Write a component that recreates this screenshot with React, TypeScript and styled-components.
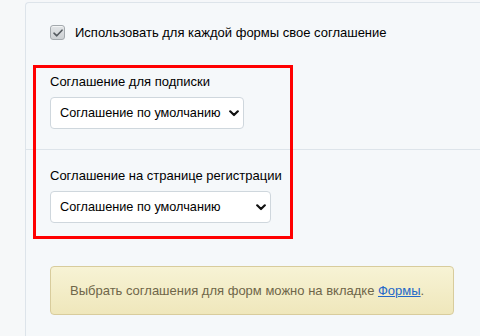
import React from 'react'
import styled, { createGlobalStyle } from 'styled-components'

const GlobalStyle = createGlobalStyle`
  html, body {
    margin: 0;
    padding: 0;
    background: #f5f7f9;
    font-family: 'Liberation Sans', Arial, sans-serif;
    font-size: 13px;
    color: #000;
  }
`

const Page = styled.div`
  display: flex;
  width: 480px;
  height: 336px;
  overflow: hidden;
  background: #f5f7f9;
`

const Gutter = styled.div`
  width: 25px;
  flex-shrink: 0;
  background: #f6f8f9;
`

const Panel = styled.div`
  flex: 1;
  margin-top: 2px;
  border-top: 1px solid #dde4ea;
  border-left: 1px solid #dde4ea;
  border-top-left-radius: 4px;
  background: #f5f8fa;
`

const Row = styled.div<{ $top: number; $bottom: number }>`
  padding: ${({ $top }) => $top}px 0 ${({ $bottom }) => $bottom}px 24px;
  & + & {
    border-top: 1px solid #dde4ea;
  }
`

const CheckRow = styled.label`
  display: flex;
  align-items: center;
  gap: 10px;
  line-height: 14px;
`

const CheckBox = styled.span`
  display: flex;
  align-items: center;
  justify-content: center;
  width: 13px;
  height: 13px;
  border: 1px solid #a3a9ad;
  border-radius: 3px;
  background: linear-gradient(#e2e5e7, #cdd1d4);
  box-shadow: inset 0 1px 0 rgba(255, 255, 255, 0.6);
`

const Highlight = styled.div`
  position: relative;
`

const RedFrame = styled.div`
  position: absolute;
  top: 9px;
  left: 7px;
  width: 254px;
  height: 168px;
  border: 3px solid #ff0000;
  pointer-events: none;
`

const Label = styled.div`
  line-height: 16px;
  margin-bottom: 7px;
`

const SelectBox = styled.div<{ $width: number }>`
  display: flex;
  align-items: center;
  justify-content: space-between;
  box-sizing: border-box;
  width: ${({ $width }) => $width}px;
  height: 32px;
  padding: 0 4px 0 9px;
  border: 1px solid #cfd7dd;
  border-radius: 4px;
  background: #fff;
  font-size: 12.7px;
  cursor: pointer;

  svg {
    flex-shrink: 0;
  }
`

const Note = styled.div`
  box-sizing: border-box;
  width: 404px;
  height: 49px;
  padding: 0 0 0 19px;
  display: flex;
  align-items: center;
  border: 1px solid #d8cc9c;
  border-radius: 4px;
  background: linear-gradient(#f7f3d5, #efe7bb);
  color: #6f6649;
`

const Link = styled.a`
  color: #2468c8;
  text-decoration: underline;
`

const Chevron = () => (
  <svg width="10" height="7" viewBox="0 0 10 7">
    <path d="M1.2 1.3 L5 5 L8.8 1.3" fill="none" stroke="#111" strokeWidth="2.2" strokeLinecap="round" strokeLinejoin="round" />
  </svg>
)

const Check = () => (
  <svg width="10" height="8" viewBox="0 0 10 8">
    <path d="M1 4.2 L3.8 6.8 L9 1.2" fill="none" stroke="#555b60" strokeWidth="1.6" strokeLinecap="round" strokeLinejoin="round" />
  </svg>
)

function Select({ width, value }: { width: number; value: string }) {
  return (
    <SelectBox $width={width}>
      <span>{value}</span>
      <Chevron />
    </SelectBox>
  )
}

export default function App() {
  return (
    <Page>
      <GlobalStyle />
      <Gutter />
      <Panel>
        <Row $top={22} $bottom={16}>
          <CheckRow>
            <CheckBox>
              <Check />
            </CheckBox>
            <span>Использовать для каждой формы свое соглашение</span>
          </CheckRow>
        </Row>
        <Highlight>
          <Row $top={18} $bottom={20}>
            <Label>Соглашение для подписки</Label>
            <Select width={194} value="Соглашение по умолчанию" />
          </Row>
          <Row $top={18} $bottom={20}>
            <Label>Соглашение на странице регистрации</Label>
            <Select width={221} value="Соглашение по умолчанию" />
          </Row>
          <RedFrame />
        </Highlight>
        <Row $top={23} $bottom={20}>
          <Note>
            <span>
              Выбрать соглашения для форм можно на вкладке <Link href="#">Формы</Link>.
            </span>
          </Note>
        </Row>
      </Panel>
    </Page>
  )
}
